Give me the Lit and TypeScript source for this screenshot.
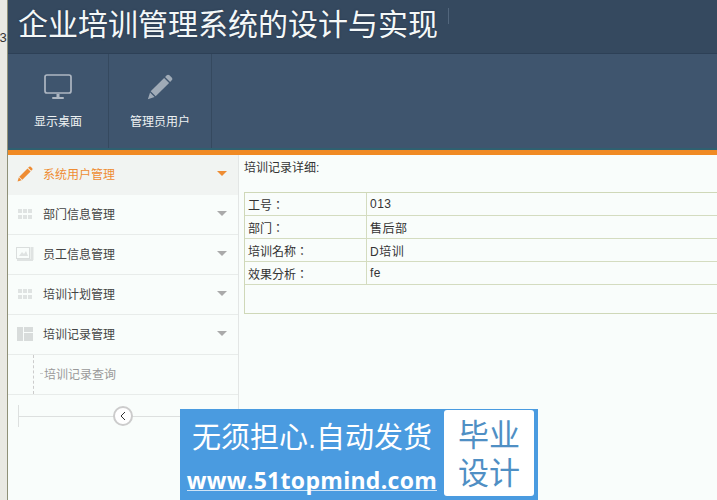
import { LitElement, html, css, svg } from "lit";
import { customElement } from "lit/decorators.js";

const pencil = (c: string, s: number) => html`<svg width=${s} height=${s} viewBox="0 0 24 24"><path fill=${c} d="M18.2 1.2a1.8 1.8 0 0 1 2.5 0l2.1 2.1a1.8 1.8 0 0 1 0 2.5l-1.5 1.5-4.6-4.6zM15.8 3.6l4.6 4.6L8 20.6 3.4 16zM2.8 17l4.2 4.2L0.8 23.2z"/></svg>`;

const grid = svg`<svg width="16" height="12" viewBox="0 0 16 12"><g fill="#dfe3e2"><rect x="1" y="1" width="4" height="4"/><rect x="6" y="1" width="4" height="4"/><rect x="11" y="1" width="4" height="4"/><rect x="1" y="7" width="4" height="4"/><rect x="6" y="7" width="4" height="4"/><rect x="11" y="7" width="4" height="4"/></g></svg>`;
const pic = svg`<svg width="18" height="15" viewBox="0 0 18 15"><rect x="0.5" y="1.5" width="13" height="11" fill="none" stroke="#dadedd"/><path d="M3 10l3-4 2 2 2-3 2 5z" fill="#dfe3e2"/><rect x="14.5" y="1" width="3" height="13" fill="#dfe3e2"/><rect x="1" y="13" width="16" height="2" fill="#dfe3e2"/></svg>`;
const layout = svg`<svg width="16" height="14" viewBox="0 0 16 14"><g fill="#d8dcdb"><rect x="0" y="0" width="6" height="14"/><rect x="7" y="0" width="9" height="5"/><rect x="7" y="6" width="9" height="8"/></g></svg>`;

const menu = [
  { label: "部门信息管理", icon: grid },
  { label: "员工信息管理", icon: pic },
  { label: "培训计划管理", icon: grid },
  { label: "培训记录管理", icon: layout },
];
const rows = [
  ["工号：", "013"],
  ["部门：", "售后部"],
  ["培训名称：", "D培训"],
  ["效果分析：", "fe"],
];

@customElement("app-root")
export class AppRoot extends LitElement {
  static styles = css`
    :host { display: block; width: 717px; height: 500px; overflow: hidden; position: relative; background: #f9fdfb;
      font-family: "Liberation Sans", "Noto Sans CJK SC", sans-serif; font-size: 12px; color: #333; }
    .page { display: flex; height: 500px; }
    .gutter { width: 8px; flex: none; background: #e9e9e3; border-right: 1px solid #8f9078; box-sizing: border-box; position: relative; overflow: hidden; }
    .gutter span { position: absolute; left: -4px; top: 30px; font-size: 13px; color: #333; }
    .main { flex: 1; min-width: 0; display: flex; flex-direction: column; }
    .title { height: 54px; box-sizing: border-box; background: #35495f; border-bottom: 1px solid #2d4056; display: flex; align-items: flex-start; padding: 5px 0 0 10px; }
    .title h1 { margin: 0; font-weight: 400; font-size: 30px; line-height: 40px; color: #f4f8f8; text-shadow: 0 0 2px #22334a; }
    .tick { width: 1px; height: 16px; background: #52667c; margin: 3px 0 0 10px; }
    .nav { height: 96px; background: #3f556e; display: flex; box-sizing: border-box; border-bottom: 2px solid #2f6070; }
    .nav a { box-sizing: border-box; border-right: 1px solid #35495f; display: flex; flex-direction: column; align-items: center; color: #eef2f3; font-size: 12px; }
    .nav a.a1 { width: 101px; }
    .nav a.a2 { width: 103px; }
    .nav .ic { height: 30px; margin-top: 18px; display: flex; align-items: center; }
    .nav .lb { margin-top: 12px; line-height: 16px; }
    .bar { height: 5px; background: #f08a24; flex: none; }
    .body { flex: 1; display: flex; min-height: 0; }
    .side { width: 231px; flex: none; box-sizing: border-box; border-right: 1px solid #e3e6e5; }
    .item { height: 40px; box-sizing: border-box; border-bottom: 1px solid #e8ecea; display: flex; align-items: center; padding: 0 0 2px 8px; color: #444; }
    .item.on { background: #f1f4f2; color: #ee8c33; border-bottom-color: #f1f4f2; }
    .iw { width: 18px; display: flex; justify-content: center; margin-right: 9px; }
    .txt { flex: 1; }
    .caret { width: 0; height: 0; border-left: 5px solid transparent; border-right: 5px solid transparent; border-top: 5px solid #aaa; margin-right: 11px; }
    .on .caret { border-top-color: #ee8c33; }
    .sub { height: 40px; box-sizing: border-box; border-bottom: 1px solid #e8ecea; display: flex; align-items: center; padding: 0 0 2px 36px; color: #999; position: relative; }
    .sub::before { content: ""; position: absolute; left: 25px; top: 0; bottom: 0; border-left: 1px dashed #ccc; }
    .sub span { position: relative; }
    .sub span::before { content: ""; position: absolute; left: -4px; top: 8px; width: 3px; border-top: 1px solid #ccc; }
    .collapse { height: 22px; margin: 10px 11px 0 10px; border-left: 1px solid #dde0df; position: relative; display: flex; align-items: center; justify-content: center; }
    .collapse::before { content: ""; position: absolute; left: 0; right: 0; top: 50%; border-top: 1px solid #dde0df; }
    .round { position: relative; width: 16px; height: 16px; border: 2px solid #ccc; border-radius: 50%; background: #fff; display: flex; align-items: center; justify-content: center; }
    .content { flex: 1; min-width: 0; padding: 4px 0 0 5px; color: #333; }
    .head { line-height: 18px; margin-bottom: 15px; }
    .box { border: 1px solid #cfd8b8; border-right: 0; height: 122px; box-sizing: border-box; }
    .row { display: flex; height: 23px; border-bottom: 1px solid #d4dcc0; box-sizing: border-box; align-items: center; }
    .row .k { width: 122px; box-sizing: border-box; padding-left: 3px; border-right: 1px solid #d4dcc0; height: 100%; display: flex; align-items: center; font-family: "Liberation Sans", "Noto Sans CJK TC", sans-serif; }
    .row .v { padding-left: 3px; letter-spacing: 0.5px; }
    .ad { position: absolute; left: 180px; top: 409px; width: 358px; height: 91px; background: #4a9be0; display: flex; box-sizing: border-box; padding: 1px 4px 4px 0; }
    .adl { flex: 1; display: flex; flex-direction: column; align-items: center; color: #fff; }
    .adl .a { font-size: 29px; line-height: 36px; margin-top: 10px; white-space: nowrap; }
    .adl .b { font-size: 23px; line-height: 20px; margin-top: 14px; font-weight: 700; border-bottom: 1px solid #cfe4f6; white-space: nowrap; font-family: "Open Sans", "Liberation Sans", sans-serif; letter-spacing: 0.3px; }
    .adr { width: 90px; box-sizing: border-box; padding-top: 4px; background: #fff; border-radius: 3px; color: #4f8fc4; font-size: 31px; line-height: 38px; display: flex; flex-direction: column; align-items: center; justify-content: center; }
  `;

  render() {
    return html`
      <div class="page">
        <div class="gutter"><span>f3</span></div>
        <div class="main">
          <div class="title"><h1>企业培训管理系统的设计与实现</h1><div class="tick"></div></div>
          <div class="nav">
            <a class="a1">
              <div class="ic"><svg width="28" height="26" viewBox="0 0 28 26"><rect x="1" y="1" width="26" height="18" rx="2" fill="none" stroke="#aeb7c2" stroke-width="1.7"/><rect x="12.5" y="20" width="3" height="3" fill="#aeb7c2"/><rect x="8" y="23" width="12" height="2" rx="1" fill="#aeb7c2"/></svg></div>
              <div class="lb">显示桌面</div>
            </a>
            <a class="a2">
              <div class="ic">${pencil("#a0abb7", 26)}</div>
              <div class="lb">管理员用户</div>
            </a>
          </div>
          <div class="bar"></div>
          <div class="body">
            <div class="side">
              <div class="item on"><div class="iw">${pencil("#ee8c33", 16)}</div><div class="txt">系统用户管理</div><div class="caret"></div></div>
              ${menu.map(m => html`<div class="item"><div class="iw">${m.icon}</div><div class="txt">${m.label}</div><div class="caret"></div></div>`)}
              <div class="sub"><span>培训记录查询</span></div>
              <div class="collapse"><div class="round"><svg width="6" height="10" viewBox="0 0 6 10"><path d="M5 1L1 5l4 4" fill="none" stroke="#333"/></svg></div></div>
            </div>
            <div class="content">
              <div class="head">培训记录详细:</div>
              <div class="box">
                ${rows.map(r => html`<div class="row"><div class="k">${r[0]}</div><div class="v">${r[1]}</div></div>`)}
              </div>
            </div>
          </div>
        </div>
      </div>
      <div class="ad">
        <div class="adl"><div class="a">无须担心.自动发货</div><div class="b">www.51topmind.com</div></div>
        <div class="adr"><div>毕业</div><div>设计</div></div>
      </div>
    `;
  }
}
